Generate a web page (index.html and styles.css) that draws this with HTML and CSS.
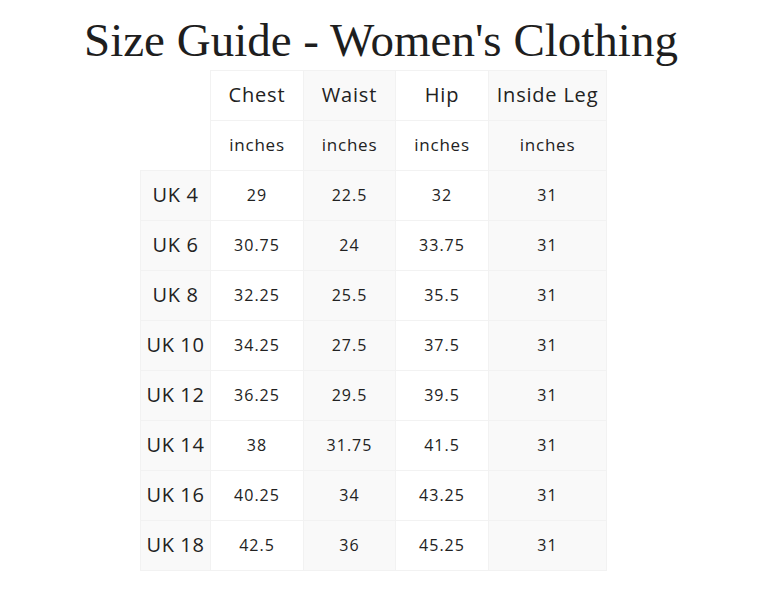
FILE: index.html
```html
<!DOCTYPE html>
<html>
<head>
<meta charset="utf-8">
<link rel="stylesheet" href="styles.css">
</head>
<body>
<h1 class="title">Size Guide - Women's Clothing</h1>
<div class="wrap">
<table class="sizes">
<colgroup>
<col class="c0"><col class="c1"><col class="c2"><col class="c3"><col class="c4">
</colgroup>
<thead>
<tr class="head"><th class="blank"></th><th>Chest</th><th class="alt">Waist</th><th>Hip</th><th class="alt">Inside Leg</th></tr>
<tr class="units"><th class="blank"></th><td>inches</td><td class="alt">inches</td><td>inches</td><td class="alt">inches</td></tr>
</thead>
<tbody>
<tr><th class="size">UK 4</th><td>29</td><td class="alt">22.5</td><td>32</td><td class="alt">31</td></tr>
<tr><th class="size">UK 6</th><td>30.75</td><td class="alt">24</td><td>33.75</td><td class="alt">31</td></tr>
<tr><th class="size">UK 8</th><td>32.25</td><td class="alt">25.5</td><td>35.5</td><td class="alt">31</td></tr>
<tr><th class="size">UK 10</th><td>34.25</td><td class="alt">27.5</td><td>37.5</td><td class="alt">31</td></tr>
<tr><th class="size">UK 12</th><td>36.25</td><td class="alt">29.5</td><td>39.5</td><td class="alt">31</td></tr>
<tr><th class="size">UK 14</th><td>38</td><td class="alt">31.75</td><td>41.5</td><td class="alt">31</td></tr>
<tr><th class="size">UK 16</th><td>40.25</td><td class="alt">34</td><td>43.25</td><td class="alt">31</td></tr>
<tr><th class="size">UK 18</th><td>42.5</td><td class="alt">36</td><td>45.25</td><td class="alt">31</td></tr>
</tbody>
</table>
</div>
</body>
</html>
```
FILE: styles.css
```css
html, body {
  margin: 0;
  padding: 0;
  background: #ffffff;
}
body {
  color: #222222;
  font-family: "Open Sans", "Noto Sans", sans-serif;
}
.title {
  margin: 13px 0 0 0;
  height: 57px;
  line-height: 55px;
  text-align: center;
  font-family: "Liberation Serif", "DejaVu Serif", serif;
  font-weight: normal;
  font-size: 47px;
  color: #1e1e1e;
  padding-right: 6px;
}
.wrap {
  padding-left: 140px;
}
.sizes {
  border-collapse: collapse;
  table-layout: fixed;
  width: 466px;
}
.c0 { width: 70px; }
.c1 { width: 93px; }
.c2 { width: 92px; }
.c3 { width: 93px; }
.c4 { width: 118px; }
.sizes th, .sizes td {
  height: 47px;
  padding: 0 0 2px 0;
  text-align: center;
  vertical-align: middle;
  border: 1px solid #f2f2f2;
  font-weight: normal;
}
.sizes td {
  font-size: 16px;
  letter-spacing: 1px;
}
.sizes .head th {
  font-size: 20px;
  letter-spacing: 0.8px;
}
.sizes .units td {
  font-size: 17px;
  letter-spacing: 0.8px;
}
.sizes th.blank {
  border: none;
  background: #ffffff;
}
.sizes .alt {
  background: #f9f9f9;
}
.sizes th.size {
  background: #f9f9f9;
  font-size: 20px;
  letter-spacing: 0.6px;
}
```
